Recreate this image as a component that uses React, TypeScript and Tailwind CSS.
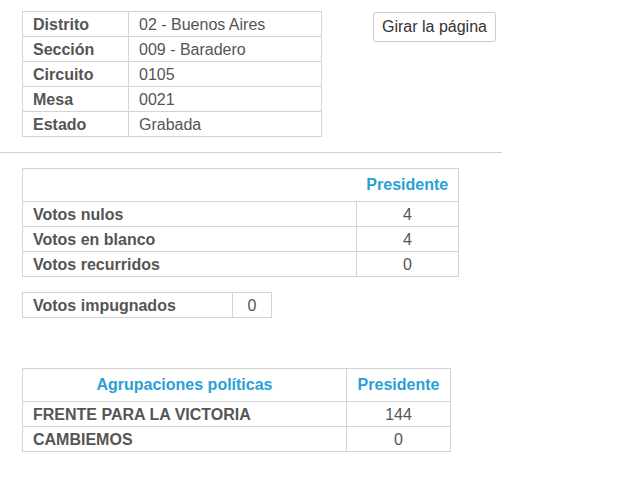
const info = [
  ["Distrito", "02 - Buenos Aires"],
  ["Sección", "009 - Baradero"],
  ["Circuito", "0105"],
  ["Mesa", "0021"],
  ["Estado", "Grabada"],
];

const votos = [
  ["Votos nulos", "4"],
  ["Votos en blanco", "4"],
  ["Votos recurridos", "0"],
];

const agrupaciones = [
  ["FRENTE PARA LA VICTORIA", "144"],
  ["CAMBIEMOS", "0"],
];

const td = "h-[25px] border border-[#d4d4d4] px-[10px] py-0 leading-[23px]";

export default function App() {
  return (
    <div className="min-h-screen bg-white text-[16px] text-[#555] [font-family:'Liberation_Sans',Arial,sans-serif]">
      <div className="w-[502px]">
        <div className="flex items-start pl-[22px] pt-[11px]">
          <table className="w-[300px] border-collapse">
            <tbody>
              {info.map(([k, v]) => (
                <tr key={k}>
                  <td className={`${td} w-[106px] font-bold`}>{k}</td>
                  <td className={td}>{v}</td>
                </tr>
              ))}
            </tbody>
          </table>
          <button className="ml-[51px] mt-px h-[30px] rounded-[3px] border border-[#ccc] bg-white px-[8px] text-[16px] leading-[28px] text-[#333]">
            Girar la página
          </button>
        </div>
        <hr className="mt-[15px] border-0 border-t border-[#d0d0d0]" />
      </div>

      <div className="ml-[22px] mt-[15px]">
        <table className="w-[437px] border-collapse">
          <thead>
            <tr>
              <th className="h-[33px] border border-r-0 border-[#d4d4d4]"></th>
              <th className="h-[33px] w-[102px] border border-l-0 border-[#d4d4d4] px-0 text-center font-bold text-[#2a9fd6]">
                Presidente
              </th>
            </tr>
          </thead>
          <tbody>
            {votos.map(([k, v]) => (
              <tr key={k}>
                <td className={`${td} font-bold`}>{k}</td>
                <td className={`${td} text-center`}>{v}</td>
              </tr>
            ))}
          </tbody>
        </table>

        <table className="mt-[15px] w-[250px] border-collapse">
          <tbody>
            <tr>
              <td className={`${td} w-[210px] font-bold`}>Votos impugnados</td>
              <td className={`${td} text-center`}>0</td>
            </tr>
          </tbody>
        </table>

        <table className="mt-[50px] w-[429px] border-collapse">
          <thead>
            <tr>
              <th className="h-[33px] border border-[#d4d4d4] px-[10px] text-center font-bold text-[#2a9fd6]">
                Agrupaciones políticas
              </th>
              <th className="h-[33px] w-[104px] border border-[#d4d4d4] px-0 text-center font-bold text-[#2a9fd6]">
                Presidente
              </th>
            </tr>
          </thead>
          <tbody>
            {agrupaciones.map(([k, v]) => (
              <tr key={k}>
                <td className={`${td} font-bold`}>{k}</td>
                <td className={`${td} text-center`}>{v}</td>
              </tr>
            ))}
          </tbody>
        </table>
      </div>
    </div>
  );
}
